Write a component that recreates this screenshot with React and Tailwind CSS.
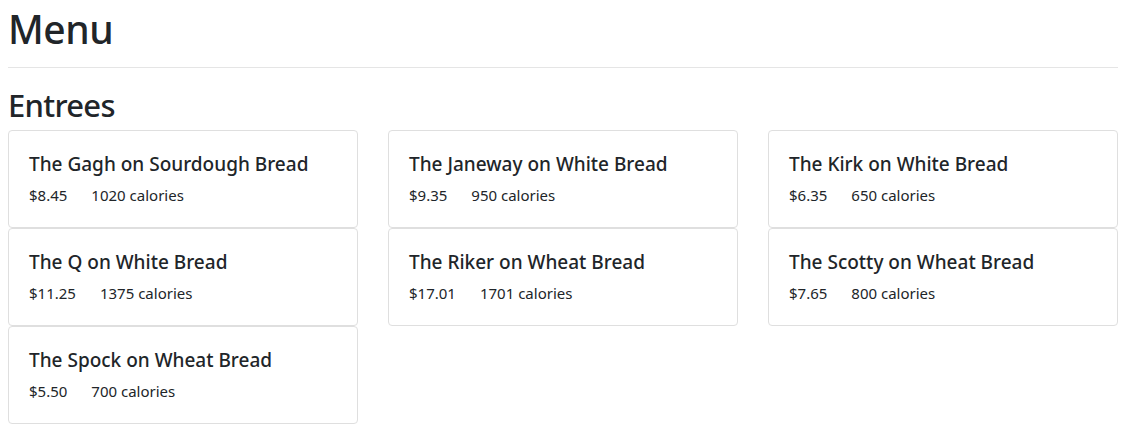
const entrees = [
  { name: "The Gagh on Sourdough Bread", price: "$8.45", calories: 1020 },
  { name: "The Janeway on White Bread", price: "$9.35", calories: 950 },
  { name: "The Kirk on White Bread", price: "$6.35", calories: 650 },
  { name: "The Q on White Bread", price: "$11.25", calories: 1375 },
  { name: "The Riker on Wheat Bread", price: "$17.01", calories: 1701 },
  { name: "The Scotty on Wheat Bread", price: "$7.65", calories: 800 },
  { name: "The Spock on Wheat Bread", price: "$5.50", calories: 700 },
];

export default function App() {
  return (
    <div
      className="min-h-screen bg-white text-[#212529] pl-[8px] pr-[9px] pt-[5px]"
      style={{ fontFamily: '"Noto Sans", "Open Sans", sans-serif' }}
    >
      {/* HEADER */}
      <h1 className="text-[39px] leading-[47px] tracking-[-0.5px] font-medium">Menu</h1>
      <hr className="mt-[15px] border-t border-[#e5e5e5]" />

      <h2 className="mt-[19px] text-[31px] leading-[37px] tracking-[-0.7px] font-medium">
        Entrees
      </h2>

      {/* CARDS */}
      <div className="mt-[6px] grid grid-cols-3 gap-x-[30px]">
        {entrees.map((item) => (
          <div
            key={item.name}
            className="h-[98px] bg-white border border-[#dfdfdf] rounded-[4px] px-5 pt-[22px]"
          >
            <h5 className="text-[19px] leading-[22px] font-medium">{item.name}</h5>
            <div className="mt-[10px] flex gap-6 text-[15px] leading-[20px]">
              <span>{item.price}</span>
              <span>{item.calories} calories</span>
            </div>
          </div>
        ))}
      </div>
    </div>
  );
}
